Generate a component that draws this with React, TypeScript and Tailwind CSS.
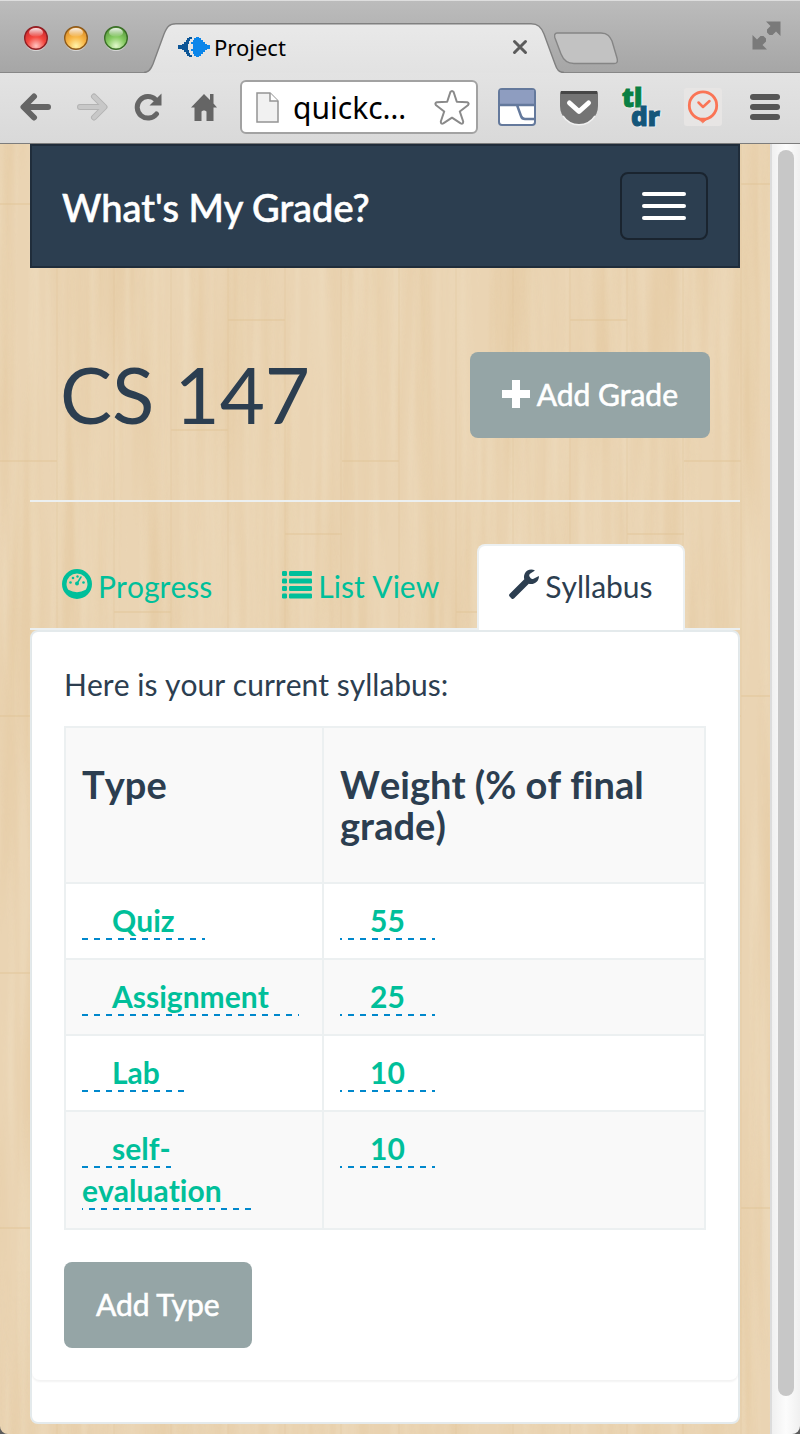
import React from "react";

type SyllabusRow = { type: string; weight: string };

const rows: SyllabusRow[] = [
  { type: "Quiz", weight: "55" },
  { type: "Assignment", weight: "25" },
  { type: "Lab", weight: "10" },
  { type: "self-evaluation", weight: "10" },
];

function WoodGrain() {
  return (
    <svg className="absolute inset-0 h-full w-full" aria-hidden="true">
      <defs>
        <filter id="grain-light" x="0" y="0" width="100%" height="100%" colorInterpolationFilters="sRGB">
          <feTurbulence type="fractalNoise" baseFrequency="0.1 0.004" numOctaves="2" seed="4" />
          <feColorMatrix values="0 0 0 0 0.94  0 0 0 0 0.88  0 0 0 0 0.77  2.4 0 0 0 -1" />
        </filter>
        <filter id="grain-dark" x="0" y="0" width="100%" height="100%" colorInterpolationFilters="sRGB">
          <feTurbulence type="fractalNoise" baseFrequency="0.05 0.003" numOctaves="2" seed="11" />
          <feColorMatrix values="0 0 0 0 0.88  0 0 0 0 0.76  0 0 0 0 0.58  2.4 0 0 0 -0.95" />
        </filter>
        <pattern id="planks" width="342" height="512" patternUnits="userSpaceOnUse">
          <g stroke="#dfc193" strokeWidth="1.5" opacity="0.55" fill="none">
            <path d="M57 0V512M114 0V512M171 0V512M228 0V512M285 0V512M341 0V512" opacity="0.5" />
            <path d="M0 317H57M57 40H114M114 468H171M171 286H228M228 176H285M285 72H342M0 60H57M285 390H342" />
          </g>
        </pattern>
      </defs>
      <rect width="100%" height="100%" fill="#ead4b3" />
      <rect width="100%" height="100%" filter="url(#grain-dark)" opacity="0.38" />
      <rect width="100%" height="100%" filter="url(#grain-light)" opacity="0.4" />
      <rect width="100%" height="100%" fill="url(#planks)" />
    </svg>
  );
}

function Light({ id, edge, deep, mid, glow }: { id: string; edge: string; deep: string; mid: string; glow: string }) {
  return (
    <svg width="24" height="26" viewBox="0 0 24 26" aria-hidden="true">
      <defs>
        <radialGradient id={id} cx="0.5" cy="0.85" r="0.8">
          <stop offset="0" stopColor={glow} />
          <stop offset="0.5" stopColor={mid} />
          <stop offset="1" stopColor={deep} />
        </radialGradient>
        <linearGradient id={id + "-shine"} x1="0" y1="0" x2="0" y2="1">
          <stop offset="0" stopColor="#fff" stopOpacity="0.9" />
          <stop offset="1" stopColor="#fff" stopOpacity="0.05" />
        </linearGradient>
      </defs>
      <circle cx="12" cy="13.5" r="11.5" fill="#d4d4d4" />
      <circle cx="12" cy="12" r="11.3" fill={`url(#${id})`} stroke={edge} strokeWidth="1.4" />
      <ellipse cx="12" cy="6.4" rx="7" ry="4.4" fill={`url(#${id}-shine)`} />
    </svg>
  );
}

function TabStrip() {
  return (
    <div className="relative flex h-[73px] items-start border-b border-[#878787] bg-linear-to-b from-[#bcbcbc] to-[#a6a6a6] pl-6 font-['Noto_Sans',sans-serif] shadow-[inset_0_1px_0_#dedede]">
      <div className="flex gap-4 pt-[26px]">
        <button type="button" aria-label="Close window">
          <Light id="red" edge="#8e2024" deep="#c9252b" mid="#f4483f" glow="#ffc4c0" />
        </button>
        <button type="button" aria-label="Minimize window">
          <Light id="amber" edge="#8c5a1c" deep="#d98a24" mid="#f8b646" glow="#fff3a8" />
        </button>
        <button type="button" aria-label="Zoom window">
          <Light id="green" edge="#3b6e28" deep="#58993c" mid="#86cb62" glow="#e2f8cc" />
        </button>
      </div>
      <div className="relative ml-4 mt-[23px] h-[50px] w-[420px]">
        <svg className="absolute inset-0" width="420" height="50" viewBox="0 0 420 50" aria-hidden="true">
          <defs>
            <linearGradient id="tab-fill" x1="0" y1="0" x2="0" y2="1">
              <stop offset="0" stopColor="#e9e9e9" />
              <stop offset="1" stopColor="#e2e2e2" />
            </linearGradient>
          </defs>
          <path d="M0 50V49.500C5 49.500 7 46 9 41L20 11C23 4 25 .8 32 .8H387C394 .8 397 4 400 11L411 41C413 47 415 49.500 420 49.500V50Z" fill="url(#tab-fill)" />
          <path d="M0 49.500C5 49.500 7 46 9 41L20 11C23 4 25 .8 32 .8H387C394 .8 397 4 400 11L411 41C413 47 415 49.500 420 49.500" fill="none" stroke="#808080" strokeWidth="1.4" />
        </svg>
        <div className="relative flex h-full items-center pb-0.5 pl-[34px] pr-9">
          <svg width="32" height="20" viewBox="0 0 32 20" aria-hidden="true">
            <path d="M0 8h4V7h2V5h2V3h1V1h2V0h3v2h-2v2h-1v3h-1v6h1v3h1v2h2v2h-3v-1H9v-2H8v-2H6v-2H4v-1H0Z" fill="#0c5596" />
            <path d="M15 3h1V1h2V0h3v1h2v2h2v2h2v2h2v1h3v4h-3v1h-2v2h-2v2h-2v2h-2v1h-3v-1h-2v-2h-1v-3h-2v-2h2V7h-2V5h2Z" fill="#0b86ea" />
          </svg>
          <span className="ml-1 flex-1 text-[22px] leading-7 text-black">Project</span>
          <button type="button" aria-label="Close tab">
            <svg width="16" height="16" viewBox="0 0 16 16" aria-hidden="true">
              <path d="M2.500 2.500 13.500 13.500M13.500 2.500 2.500 13.500" stroke="#5b5b5b" strokeWidth="3" strokeLinecap="round" />
            </svg>
          </button>
        </div>
      </div>
      <button type="button" aria-label="New tab" className="-ml-2.5 mt-8">
        <svg width="64" height="33" viewBox="0 0 64 33" aria-hidden="true">
          <path d="M3 1H47C54 1 56 5 58 9L63 26C64 30 63 31.500 60 31.500H20C12 31.500 9 27 7 22L1 6C0 3 1 1 3 1Z" fill="#c2c2c2" stroke="#858585" strokeWidth="1.400" />
        </svg>
      </button>
      <button type="button" aria-label="Full screen" className="ml-auto mr-[19px] mt-[21px]">
        <svg width="29" height="29" viewBox="0 0 29 29" aria-hidden="true">
          <path d="M14 .5H28.500V15L24 10.500 20.500 14 17.500 14 15 11.500V8.500L18.500 5ZM.5 14 5 18.500 8.500 15H11.500L14 17.500V20.500L10.500 24 15 28.500H.5Z" fill="#7a7a7a" />
        </svg>
      </button>
    </div>
  );
}

function Toolbar() {
  return (
    <div className="flex h-[71px] items-center border-b border-[#7c7c7c] bg-linear-to-b from-[#e3e3e3] to-[#d9d9d9] pb-0.5 pl-2 pr-4 font-['Noto_Sans',sans-serif]">
      <button type="button" aria-label="Back" className="flex w-14 justify-center">
        <svg width="32" height="28" viewBox="0 0 32 28" fill="none" stroke="#656565" strokeWidth="6" strokeLinecap="round" strokeLinejoin="round" aria-hidden="true">
          <path d="M14 3.500 3.500 14 14 24.500M4 14H28" />
        </svg>
      </button>
      <button type="button" aria-label="Forward" className="flex w-14 justify-center">
        <svg width="32" height="28" viewBox="0 0 32 28" fill="none" strokeLinecap="round" strokeLinejoin="round" aria-hidden="true">
          <path d="M18 3.500 28.500 14 18 24.500M28 14H4" stroke="#b3b3b3" strokeWidth="6" />
          <path d="M18 3.500 28.500 14 18 24.500M28 14H4" stroke="#c8c8c8" strokeWidth="4" />
        </svg>
      </button>
      <button type="button" aria-label="Reload" className="flex w-14 justify-center">
        <svg width="28" height="28" viewBox="0 0 28 28" aria-hidden="true">
          <path d="M22.500 21A10.800 10.800 0 1 1 21.500 6.500" fill="none" stroke="#656565" strokeWidth="5" strokeLinecap="round" />
          <path d="M27.500 .5V12.500H15.500Z" fill="#656565" />
        </svg>
      </button>
      <button type="button" aria-label="Home" className="flex w-14 justify-center">
        <svg width="26" height="28" viewBox="0 0 26 28" fill="#656565" aria-hidden="true">
          <path d="M13 1 19 7V1H22.500V10.500L26 14.500H22.500V28H15.500V19C15.500 17 10.500 17 10.500 19V28H3.500V14.500H0Z" />
        </svg>
      </button>
      <div className="ml-2 flex h-[54px] min-w-0 flex-1 items-center rounded-md border-2 border-[#a2a2a2] bg-white pl-[14px] pr-1.5">
        <svg width="23" height="31" viewBox="0 0 23 31" className="shrink-0" aria-hidden="true">
          <path d="M1 1H14L22 9V30H1Z" fill="#f1f1f1" stroke="#949494" strokeWidth="1.500" />
          <path d="M14 1V9H22" fill="#fff" stroke="#949494" strokeWidth="1.500" />
        </svg>
        <input
          aria-label="Address"
          defaultValue="quickc…"
          className="ml-[14px] w-0 min-w-0 flex-1 bg-transparent pt-0.5 text-[30px] leading-9 text-black outline-none"
        />
        <button type="button" aria-label="Bookmark this page" className="shrink-0">
          <svg width="36" height="35" viewBox="0 0 36 35" aria-hidden="true">
            <path d="M16.300 2.200Q18 -.2 19.700 2.200L22.800 11.800 33.200 12.300Q35.600 13.200 33.900 15.300L25.800 21.500 29.200 31.500Q29.200 34.400 26.700 33.400L18 27.700 9.300 33.400Q6.800 34.400 6.800 31.500L10.200 21.500 2.100 15.300Q.4 13.200 2.800 12.300L13.200 11.800Z" fill="#fff" stroke="#8a8a8a" strokeWidth="2" strokeLinejoin="round" />
          </svg>
        </button>
      </div>
      <div className="ml-5 flex gap-6">
        <button type="button" aria-label="Window extension">
          <svg width="38" height="38" viewBox="0 0 38 38" aria-hidden="true">
            <rect x="1" y="1" width="36" height="36" rx="3" fill="#fff" stroke="#64799c" strokeWidth="2" />
            <path d="M2 2H36V17H2Z" fill="#8e9dc0" />
            <path d="M1 17H19L23 28Q24 31 27 31H37M19 17H37" fill="none" stroke="#64799c" strokeWidth="2.500" />
          </svg>
        </button>
        <button type="button" aria-label="Pocket">
          <svg width="38" height="38" viewBox="0 0 38 38" aria-hidden="true">
            <path d="M0 5Q0 3 2 3H36Q38 3 38 5V18A19 19 0 0 1 0 18Z" fill="#747474" />
            <path d="M1 4.500H37" stroke="#464646" strokeWidth="3" />
            <path d="M9.500 15 19 23.500 28.500 15" fill="none" stroke="#fff" strokeWidth="5" strokeLinecap="round" strokeLinejoin="round" />
            <path d="M3 28A19 19 0 0 0 35 28" fill="none" stroke="#f1f1f1" strokeWidth="1.500" />
          </svg>
        </button>
        <button type="button" className="flex h-[38px] w-[38px] flex-col font-['Open_Sans',sans-serif] text-[26px] font-extrabold leading-[19px] [-webkit-text-stroke:1px] [text-shadow:0_0_3px_#fff,1px_1px_1px_#fff]">
          <span className="self-start text-[#0a8043]">tl</span>
          <span className="self-end text-[#15567a]">dr</span>
        </button>
        <button type="button" aria-label="Time tracker">
          <svg width="38" height="38" viewBox="0 0 38 38" fill="none" stroke="#fa7455" strokeLinecap="round" strokeLinejoin="round" aria-hidden="true">
            <rect width="38" height="38" rx="3" fill="#e7e5e4" stroke="none" />
            <circle cx="19" cy="17.500" r="13.700" strokeWidth="2.800" />
            <path d="M15.500 31.500H22.500L19 34.500Z" fill="#fa7455" strokeWidth="1" />
            <path d="M14.500 14.500 19 19 25.500 13" strokeWidth="2.500" />
          </svg>
        </button>
        <button type="button" aria-label="Browser menu" className="flex w-[38px] items-center justify-center">
          <svg width="30" height="28" viewBox="0 0 30 28" fill="#565656" aria-hidden="true">
            <rect y="1" width="30" height="6" rx="3" />
            <rect y="11" width="30" height="6" rx="3" />
            <rect y="21" width="30" height="6" rx="3" />
          </svg>
        </button>
      </div>
    </div>
  );
}

function DashboardIcon() {
  return (
    <svg width="30" height="30" viewBox="0 0 30 30" aria-hidden="true">
      <path fillRule="evenodd" d="M15 0A15 15 0 1 1 15 30A15 15 0 1 1 15 0ZM15 4.500A10.500 10.500 0 0 0 4.500 15C4.500 17.200 5.200 19.200 6.300 20.800Q15 25.500 23.700 20.800C24.800 19.200 25.500 17.200 25.500 15A10.500 10.500 0 0 0 15 4.500Z" fill="currentColor" />
      <g fill="currentColor">
        <circle cx="8.500" cy="13.500" r="1.300" />
        <circle cx="11" cy="9" r="1.300" />
        <circle cx="15.500" cy="7.500" r="1.200" />
        <circle cx="21.500" cy="13.500" r="1.300" />
        <circle cx="15" cy="14.500" r="2" />
      </g>
      <path d="M15 14.500 19 8" stroke="currentColor" strokeWidth="1.500" strokeLinecap="round" />
    </svg>
  );
}

function ListIcon() {
  return (
    <svg width="30" height="30" viewBox="0 0 30 30" fill="currentColor" aria-hidden="true">
      {[2, 9.5, 17, 24.5].map((y) => (
        <g key={y}>
          <rect y={y} width="5" height="5" rx="1.200" />
          <rect x="7" y={y} width="23" height="5" rx="1.200" />
        </g>
      ))}
    </svg>
  );
}

function WrenchIcon() {
  return (
    <svg width="30" height="30" viewBox="0 0 30 30" fill="currentColor" aria-hidden="true">
      <path d="M26 1.500C22 -.6 17.500 1 15.800 4.500 14.800 6.700 14.800 8.500 15.300 10.300L.8 24.800C-.2 25.800 -.2 26.700 .6 27.500L2.500 29.400C3.300 30.200 4.300 30.200 5.200 29.300L19.800 14.800C22.300 15.500 25.500 15 27.700 12.800 29.300 11.200 30 9 29.900 7L24.500 9.700C23.500 10.200 22.500 10 21.700 9.200L20.500 7.600C20 6.500 20.200 5.500 21 4.800Z" />
    </svg>
  );
}

function Tab({ label, icon, active }: { label: string; icon: React.ReactNode; active?: boolean }) {
  return (
    <li className="mr-1.5">
      <a
        href="#"
        aria-current={active ? "page" : undefined}
        className={
          active
            ? "relative -mb-0.5 flex rounded-t-lg border-2 border-b-0 border-[#ecf0f1] bg-white px-[30px] pb-[23px] pt-[19px] leading-[42px] text-[#2c3e50]"
            : "flex rounded-t-lg border-2 border-b-0 border-transparent px-[30px] pb-[21px] pt-[19px] leading-[42px] text-[#00bf9a]"
        }
      >
        <span className="mr-1.5 pt-1">{icon}</span>
        {label}
      </a>
    </li>
  );
}

function EditableLink({ text, numeric }: { text: string; numeric?: boolean }) {
  return (
    <a
      href="#"
      className={
        "bg-[linear-gradient(90deg,#0088cc_50%,transparent_50%)] [background-size:12px_2px] bg-repeat-x px-[30px] pb-0.5 font-bold text-[#00bf9a] " +
        (numeric ? "[background-position:-4px_100%]" : "[background-position:0_100%]")
      }
    >
      {text}
    </a>
  );
}

export default function App() {
  return (
    <div className="bg-[#5c5c5c]">
      <div className="overflow-hidden rounded-b-lg">
        <TabStrip />
        <Toolbar />
        <div className="flex">
          <main className="relative min-w-0 flex-1 px-[30px] pb-[10px] font-[Lato,sans-serif] text-[30px] leading-[42px] text-[#2c3e50] [font-kerning:none] [font-variant-ligatures:none]">
            <WoodGrain />
            <div className="relative">
              <nav className="flex h-[124px] items-center justify-between border-2 border-[#202d3b] bg-[#2c3e50] px-[30px]">
                <a href="#" className="pt-0.5 text-[38px] font-medium leading-10 text-white [-webkit-text-stroke:0.6px] [font-kerning:normal]">
                  What's My Grade?
                </a>
                <button
                  type="button"
                  aria-label="Toggle navigation"
                  className="flex h-[68px] w-[88px] flex-col items-center justify-center gap-2 rounded-lg border-2 border-[#1a242f]"
                >
                  <span className="h-1 w-11 rounded-sm bg-white" />
                  <span className="h-1 w-11 rounded-sm bg-white" />
                  <span className="h-1 w-11 rounded-sm bg-white" />
                </button>
              </nav>

              <header className="flex items-center justify-between border-b-2 border-[#ecf0f1] px-[30px] pb-[62px] pt-[84px]">
                <h1 className="pb-0.5 text-[78px] leading-[84px] [font-kerning:normal]">CS 147</h1>
                <button type="button" className="flex h-[86px] items-center rounded-lg bg-[#95a5a6] px-8 pb-0.5 text-white [-webkit-text-stroke:0.6px] [font-kerning:normal]">
                  <svg width="28" height="28" viewBox="0 0 28 28" className="mr-[7px]" aria-hidden="true">
                    <path d="M10 0H18V10H28V18H18V28H10V18H0V10H10Z" fill="currentColor" />
                  </svg>
                  Add Grade
                </button>
              </header>

              <ul className="mt-[42px] flex border-b-2 border-[#ecf0f1]">
                <Tab label="Progress" icon={<DashboardIcon />} />
                <Tab label="List View" icon={<ListIcon />} />
                <Tab label="Syllabus" icon={<WrenchIcon />} active />
              </ul>

              <section className="rounded-lg border-2 border-[#e4eaec] bg-white pb-[42px]">
                <div className="rounded-lg px-8 pb-8 pt-[31px] shadow-[0_2px_2px_rgba(0,0,0,0.05)]">
                  <p className="mb-[21px]">Here is your current syllabus:</p>
                  <table className="w-full table-fixed border-collapse border-2 border-[#ecf0f1]">
                    <thead>
                      <tr className="bg-[#f9f9f9] text-left align-top text-[38px] leading-[41px]">
                        <th className="w-[258px] border-2 border-[#ecf0f1] px-4 py-9 font-bold">Type</th>
                        <th className="border-2 border-[#ecf0f1] px-4 py-9 font-bold">Weight (% of final grade)</th>
                      </tr>
                    </thead>
                    <tbody>
                      {rows.map((row) => (
                        <tr key={row.type} className="align-top even:bg-[#f9f9f9]">
                          <td className="border-2 border-[#ecf0f1] px-4 pb-[17px] pt-[15px]">
                            <EditableLink text={row.type} />
                          </td>
                          <td className="border-2 border-[#ecf0f1] px-4 pb-[17px] pt-[15px]">
                            <EditableLink text={row.weight} numeric />
                          </td>
                        </tr>
                      ))}
                    </tbody>
                  </table>
                  <button type="button" className="mt-8 block h-[86px] rounded-lg bg-[#95a5a6] px-8 pb-0.5 text-white [-webkit-text-stroke:0.6px] [font-kerning:normal]">
                    Add Type
                  </button>
                </div>
              </section>
            </div>
          </main>
          <div className="flex w-[30px] justify-center border-l-2 border-[#dcdcdc] bg-linear-to-r from-[#f0f0f0] via-[#fcfcfc] to-[#f0f0f0] pb-[38px] pt-1.5">
            <div className="w-4 rounded-full bg-[#c7c7c7]" />
          </div>
        </div>
      </div>
    </div>
  );
}
